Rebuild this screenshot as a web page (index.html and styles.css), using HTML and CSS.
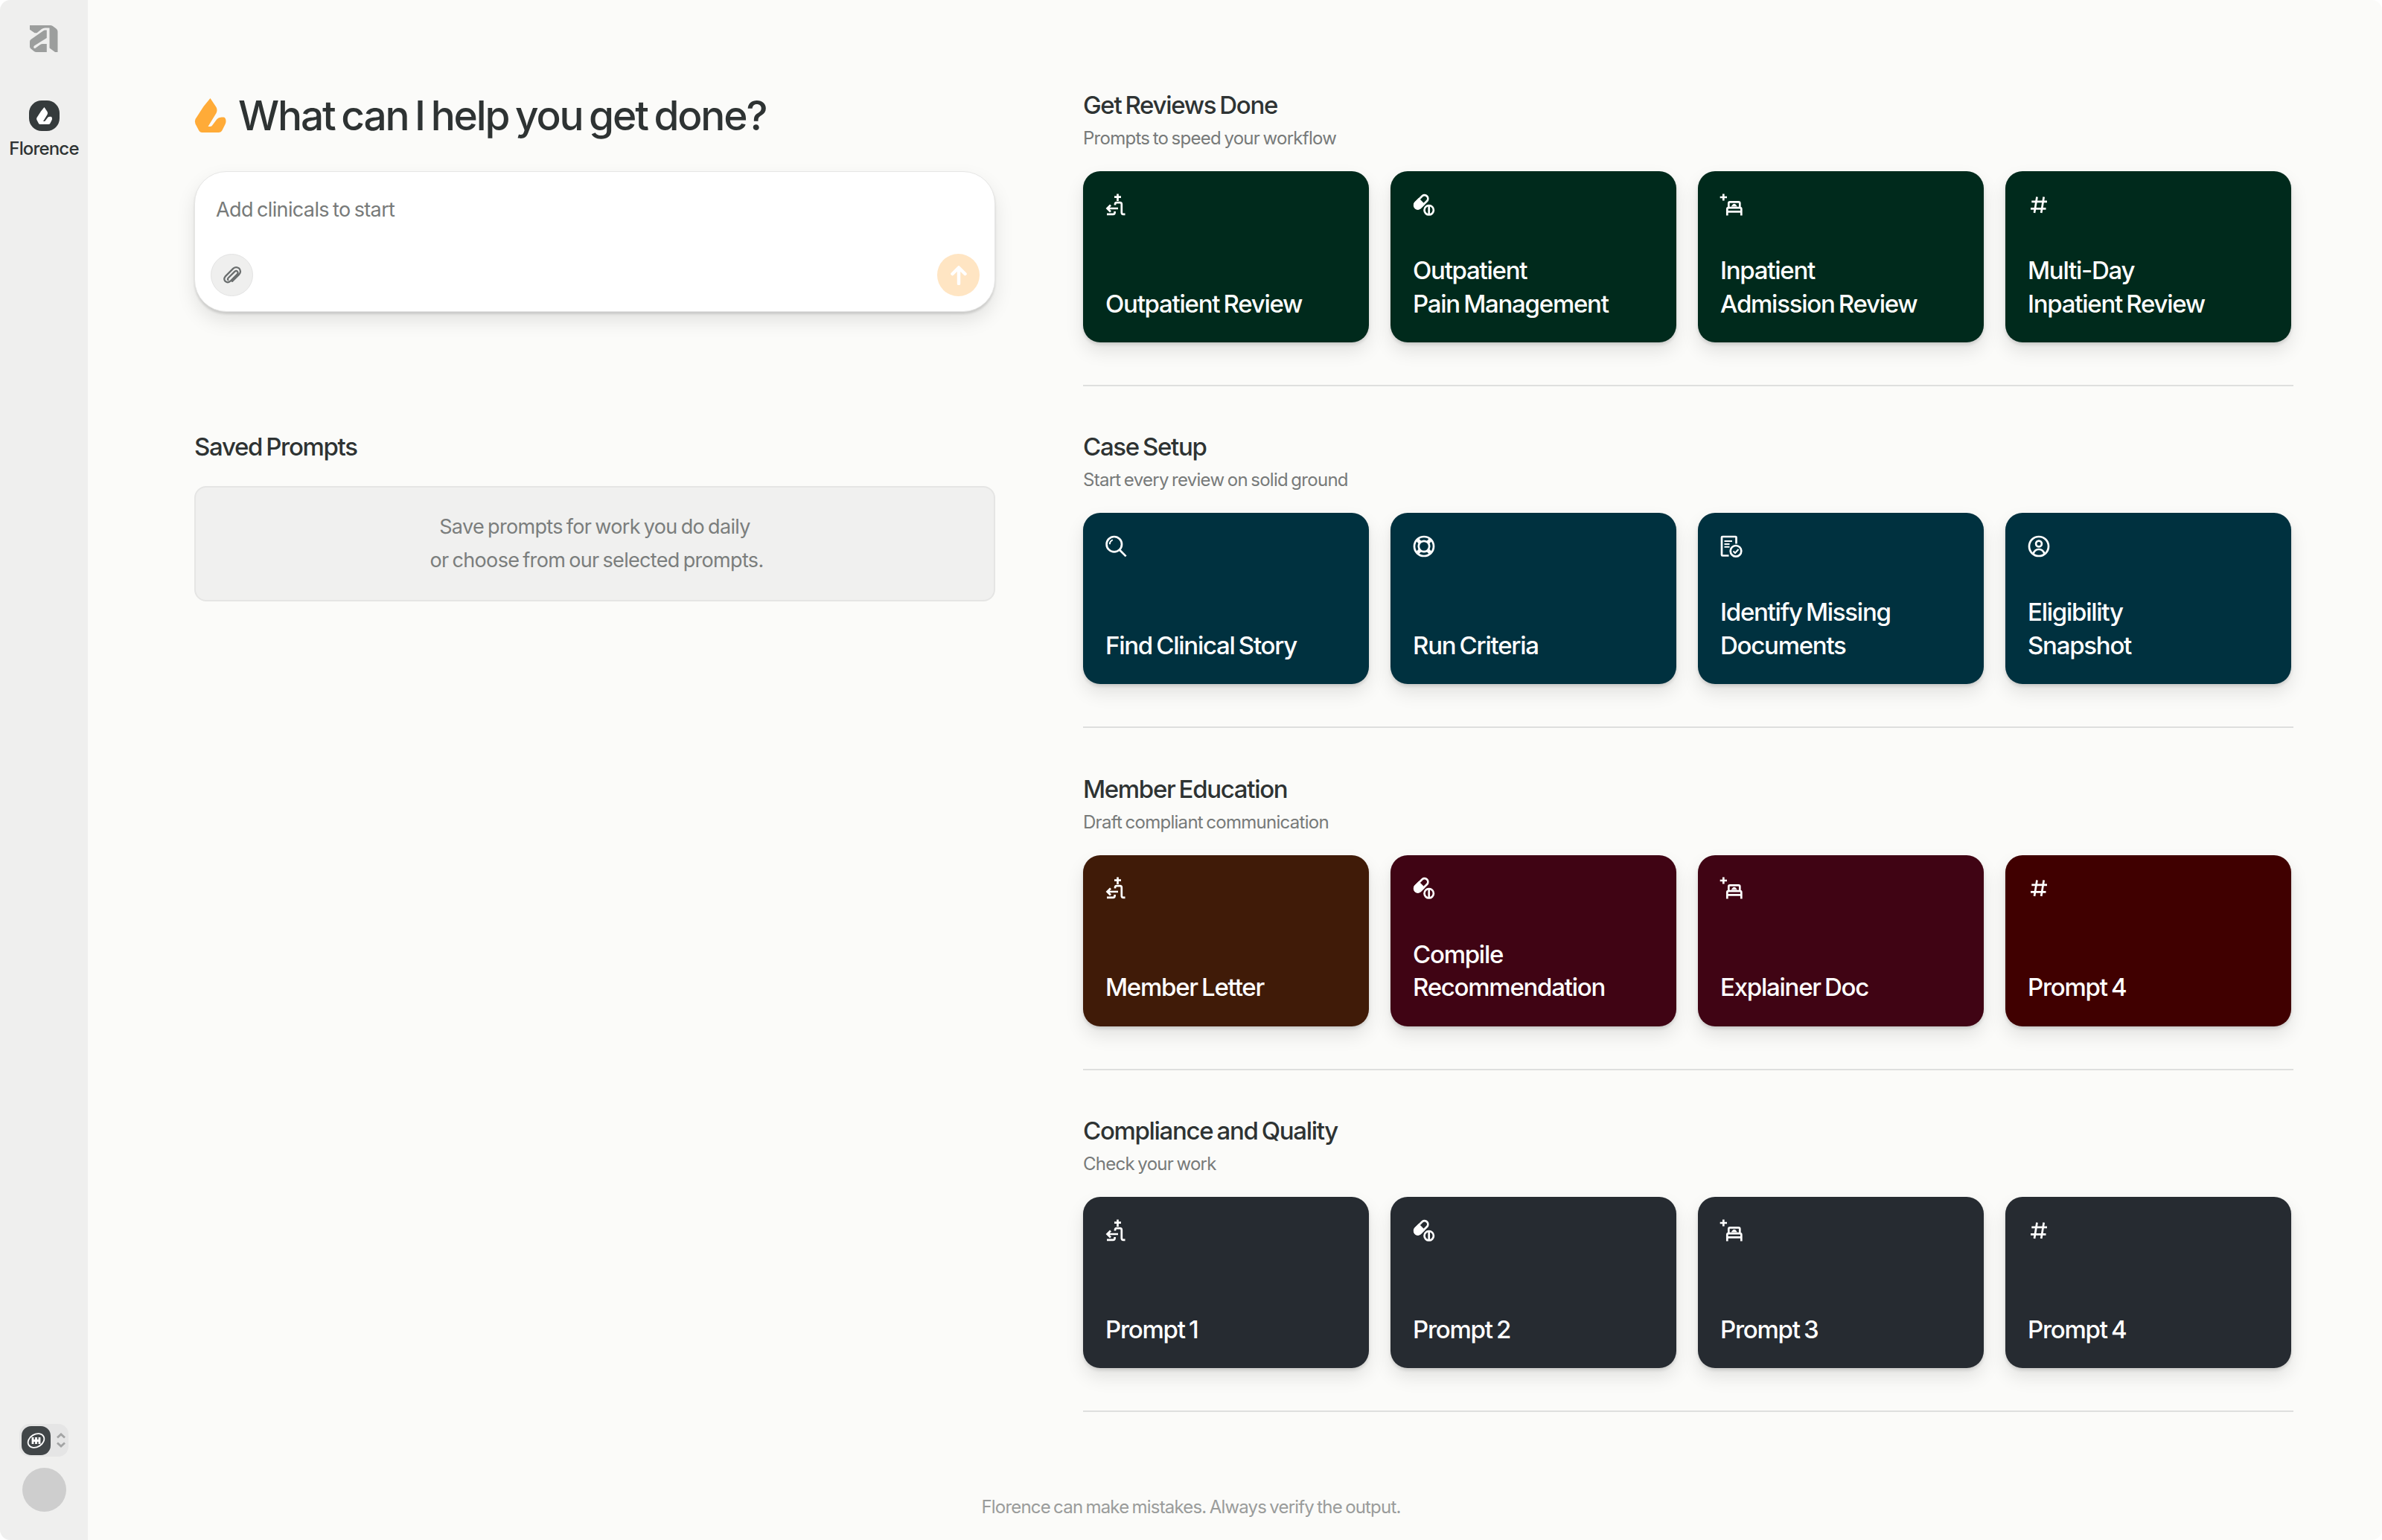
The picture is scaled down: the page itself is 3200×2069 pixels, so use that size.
FILE: index.html
```html
<!DOCTYPE html>
<html lang="en">
<head>
    <meta charset="UTF-8">
    <meta name="viewport" content="width=device-width, initial-scale=1.0">
    <title>Florence</title>
    <link rel="stylesheet" href="styles.css">
</head>
<body>
    <!-- shared icons -->
    <svg class="sprite" width="0" height="0">
        <symbol id="flame" viewBox="0 0 42 46">
            <path d="M21 0L29 12Q31 16 29 20L18 38H21Q23 38 24 36L30 28Q32 25.500 36 25.500H39Q42 26 42 31Q42 33 41 35L37 43Q35.500 46 32 46H10Q7 46 5.500 43L1 34.500Q-.5 31.500 1 28L12 11Z"/>
        </symbol>
        <symbol id="outpatient" viewBox="0 0 30 30">
            <path d="M16.500 .5V10M12 4.700H21M13 15.500V14.500Q13 12.200 15.300 12.200H19.500Q21.800 12.200 21.800 14.500V25.500Q21.800 27.800 24 27.800H26.500M2 27.800H10.300Q12.600 27.800 12.600 25.500V24M17 20H3M7 15.500L2.500 20L7 24.500"/>
        </symbol>
        <symbol id="pill" viewBox="0 0 30 30">
            <path d="M12.700 3.200A4.700 4.700 0 0 1 19.300 9.800L9.800 19.300A4.700 4.700 0 0 1 3.200 12.700Z"/>
            <path class="solid" d="M8 8L14.500 14.500L9.800 19.300A4.700 4.700 0 0 1 3.200 12.700Z"/>
            <path d="M21.700 16V29"/>
            <circle cx="21.700" cy="22.300" r="6.200"/>
        </symbol>
        <symbol id="bed" viewBox="0 0 30 30">
            <path d="M4.300 .4V9.600M-.3 5H9M11.300 18V13Q11.300 11.300 13 11.300H24.600Q26.300 11.300 26.300 13V18M9.300 29.500V21Q9.300 19.200 11 19.200H26.600Q28.300 19.200 28.300 21V29.500M9.300 24.300H28.300"/>
            <path class="solid thin" d="M16.500 16.500Q18.800 13 21 16.500Z"/>
        </symbol>
        <symbol id="hash" viewBox="0 0 30 30">
            <path d="M12.500 4.500L9 26M21.700 4.500L18.200 26M5.300 10.800H26M4 20.300H24.500"/>
        </symbol>
        <symbol id="search" viewBox="0 0 30 30">
            <circle cx="11.800" cy="12.200" r="10.200"/>
            <path d="M19 19.800L27.600 28.400"/>
            <path class="thin" d="M5.800 12.200A6.500 6.500 0 0 1 9.800 6.300"/>
        </symbol>
        <symbol id="buoy" viewBox="0 0 30 30">
            <circle cx="15" cy="15" r="13"/>
            <circle cx="15" cy="15" r="7.200"/>
            <path class="thick" d="M6.600 6.600L9.700 9.700M23.400 6.600L20.300 9.700M6.600 23.400L9.700 20.300M23.400 23.400L20.300 20.300"/>
        </symbol>
        <symbol id="document" viewBox="0 0 30 30">
            <path d="M11.500 27.500H3Q2 27.500 2 26.500V3Q2 2 3 2H20.500Q21.500 2 21.500 3V11.500"/>
            <path class="thin" d="M5.500 8H16M5.500 12H12.500M5.500 15.800H12.500M17.500 21.500L20 24L24.500 19"/>
            <circle cx="21" cy="21.300" r="7.300"/>
        </symbol>
        <symbol id="user" viewBox="0 0 30 30">
            <circle cx="15" cy="15" r="13"/>
            <circle cx="15" cy="11.500" r="3.900"/>
            <path d="M7.500 25Q9.500 19 15 19T22.500 25"/>
        </symbol>
    </svg>

    <div class="app">
        <aside class="sidebar">
            <svg class="logo" viewBox="0 0 38 36">
                <path d="M0 0H28Q30 0 31.500 1.500L35.500 4.500Q37.500 6 37.500 8.500V36H34L26.500 30.500V3.500H20.500Q18 3.500 16 5L9.500 10.200H6.500L0 5.800Z"/>
                <path d="M20.500 6.500H22.800V17L6 27.500Q4.500 29 5.500 30.500Q7 31.500 8.500 30L14 26Q15.500 25 17 25H22.800V36H9Q7 36 5.500 34.800L1.500 31.500Q0 30.500 0 28.500V22Q0 20 1.500 19L18 7.500Q19 6.500 20.500 6.500Z"/>
            </svg>
            <div class="nav-item">
                <div class="nav-icon"><svg viewBox="0 0 42 46"><use href="#flame"/></svg></div>
                <span>Florence</span>
            </div>
            <div class="sidebar-bottom">
                <div class="switcher">
                    <div class="org">
                        <svg viewBox="0 0 26 22">
                            <ellipse cx="12.500" cy="11.500" rx="11.500" ry="8.500" transform="rotate(-30 12.500 11.500)"/>
                            <path class="bars" d="M8 7V16M12.500 7V16M17 7V16M7 11.500H18"/>
                        </svg>
                    </div>
                    <svg class="chevrons" viewBox="0 0 12 20">
                        <path d="M1 6.500L6 2L11 6.500M1 13.500L6 18L11 13.500"/>
                    </svg>
                </div>
                <div class="avatar"></div>
            </div>
        </aside>

        <main class="main">
            <div class="columns">
                <section class="left">
                    <h1><svg viewBox="0 0 42 46"><use href="#flame"/></svg>What can I help you get done?</h1>
                    <div class="composer">
                        <p>Add clinicals to start</p>
                        <div class="composer-actions">
                            <button class="round attach">
                                <svg viewBox="0 0 30 30"><path d="M10 18L18.500 9.500Q21 7.500 22.500 9.500Q24 11.500 22 13.500L12 23.500Q8.500 26.500 5 23.500Q2 20 5 16.500L16.500 5Q20.500 1.500 25 5Q28.500 9.500 25 13.500L15 23.500M10 18Q7.500 20.500 9 21.500"/></svg>
                            </button>
                            <button class="round send">
                                <svg viewBox="0 0 22 26"><path d="M11 24V3M2.500 11L11 2.500L19.500 11"/></svg>
                            </button>
                        </div>
                    </div>
                    <h2 class="saved-title">Saved Prompts</h2>
                    <div class="saved-empty">Save prompts for work you do daily<br>&nbsp;or choose from our selected prompts.</div>
                </section>

                <section class="right">
                    <div class="group green">
                        <h2>Get Reviews Done</h2>
                        <p>Prompts to speed your workflow</p>
                        <div class="cards">
                            <div class="card"><svg><use href="#outpatient"/></svg><span>Outpatient Review</span></div>
                            <div class="card"><svg><use href="#pill"/></svg><span>Outpatient<br>Pain Management</span></div>
                            <div class="card"><svg><use href="#bed"/></svg><span>Inpatient<br>Admission Review</span></div>
                            <div class="card"><svg><use href="#hash"/></svg><span>Multi-Day<br>Inpatient Review</span></div>
                        </div>
                    </div>
                    <div class="group blue">
                        <h2>Case Setup</h2>
                        <p>Start every review on solid ground</p>
                        <div class="cards">
                            <div class="card"><svg><use href="#search"/></svg><span>Find Clinical Story</span></div>
                            <div class="card"><svg><use href="#buoy"/></svg><span>Run Criteria</span></div>
                            <div class="card"><svg><use href="#document"/></svg><span>Identify Missing<br>Documents</span></div>
                            <div class="card"><svg><use href="#user"/></svg><span>Eligibility<br>Snapshot</span></div>
                        </div>
                    </div>
                    <div class="group wine">
                        <h2>Member Education</h2>
                        <p>Draft compliant communication</p>
                        <div class="cards">
                            <div class="card brown"><svg><use href="#outpatient"/></svg><span>Member Letter</span></div>
                            <div class="card"><svg><use href="#pill"/></svg><span>Compile<br>Recommendation</span></div>
                            <div class="card"><svg><use href="#bed"/></svg><span>Explainer Doc</span></div>
                            <div class="card red"><svg><use href="#hash"/></svg><span>Prompt 4</span></div>
                        </div>
                    </div>
                    <div class="group slate">
                        <h2>Compliance and Quality</h2>
                        <p>Check your work</p>
                        <div class="cards">
                            <div class="card"><svg><use href="#outpatient"/></svg><span>Prompt 1</span></div>
                            <div class="card"><svg><use href="#pill"/></svg><span>Prompt 2</span></div>
                            <div class="card"><svg><use href="#bed"/></svg><span>Prompt 3</span></div>
                            <div class="card"><svg><use href="#hash"/></svg><span>Prompt 4</span></div>
                        </div>
                    </div>
                </section>
            </div>
            <footer>Florence can make mistakes. Always verify the output.</footer>
        </main>
    </div>
</body>
</html>
```
FILE: styles.css
```css
* {
    box-sizing: border-box;
}
body {
    margin: 0;
    background-color: #fff;
    font-family: Inter, "Liberation Sans", sans-serif;
    color: #2e3333;
}
h1, h2, p {
    margin: 0;
    font-weight: 500;
}
h1, h2, p, footer, .card, .saved-empty {
    word-spacing: -0.07em;
}
.sprite {
    display: block;
}
.app {
    display: flex;
    height: 2069px;
    background-color: #fbfbf9;
    border-radius: 14px;
    overflow: hidden;
}

/* sidebar */
.sidebar {
    width: 118px;
    flex: none;
    display: flex;
    flex-direction: column;
    align-items: center;
    padding: 34px 0 38px;
    background-color: #efefee;
}
.logo {
    width: 38px;
    height: 36px;
    fill: #9c9e9d;
}
.nav-item {
    display: flex;
    flex-direction: column;
    align-items: center;
    margin-top: 65px;
    font-size: 24px;
    line-height: 30px;
    font-weight: 500;
    letter-spacing: -0.035em;
}
.nav-icon {
    display: flex;
    align-items: center;
    justify-content: center;
    width: 41px;
    height: 41px;
    margin-bottom: 9px;
    border-radius: 17px;
    background-color: #353b3c;
}
.nav-icon svg {
    width: 21px;
    height: 23px;
    fill: #fff;
}
.sidebar-bottom {
    margin-top: auto;
    display: flex;
    flex-direction: column;
    align-items: center;
    gap: 15px;
}
.switcher {
    display: flex;
    align-items: center;
    width: 66px;
    height: 44px;
    padding-left: 3px;
    gap: 8px;
    border-radius: 14px;
    background-color: #e5e5e5;
}
.org {
    display: flex;
    align-items: center;
    justify-content: center;
    width: 39px;
    height: 39px;
    border-radius: 13px;
    background-color: #414648;
}
.org svg {
    width: 26px;
    height: 22px;
    fill: none;
    stroke: #fff;
    stroke-width: 1.800;
}
.org .bars {
    stroke-width: 2.8;
}
.chevrons {
    width: 12px;
    height: 20px;
    fill: none;
    stroke: #a3a4a4;
    stroke-width: 2.8;
}
.avatar {
    width: 59px;
    height: 59px;
    border-radius: 50%;
    background-color: #cecece;
}

/* main area */
.main {
    flex: 1;
    display: flex;
    flex-direction: column;
}
.columns {
    display: flex;
    gap: 118px;
    padding: 120px 119px 0 143px;
}
.left {
    width: 1076px;
    flex: none;
}
h1 {
    display: flex;
    align-items: center;
    gap: 16px;
    height: 70px;
    margin-bottom: 40px;
    font-size: 55px;
    letter-spacing: -0.039em;
    white-space: nowrap;
}
h1 svg {
    width: 43px;
    height: 46px;
    fill: #ffab38;
}
.composer {
    display: flex;
    flex-direction: column;
    justify-content: space-between;
    height: 189px;
    padding: 33px 20px 20px 21px;
    border: 1px solid #e6e6e5;
    border-radius: 43px;
    background-color: #fff;
    box-shadow: 0 3px 3px rgba(0, 0, 0, 0.12), 0 12px 26px rgba(0, 0, 0, 0.1);
}
.composer p {
    padding-left: 7px;
    font-size: 27px;
    line-height: 36px;
    font-weight: 400;
    letter-spacing: -0.023em;
    color: #777a79;
}
.composer-actions {
    display: flex;
    justify-content: space-between;
}
.round {
    display: flex;
    align-items: center;
    justify-content: center;
    width: 57px;
    height: 57px;
    padding: 0;
    border: none;
    border-radius: 50%;
}
.round svg {
    fill: none;
    stroke-linecap: round;
    stroke-linejoin: round;
}
.attach {
    border: 1px solid #e3e3e3;
    background-color: #efefee;
}
.attach svg {
    width: 28px;
    height: 28px;
    stroke: #6a6e6e;
    stroke-width: 2.4;
}
.send {
    background-color: #ffe5c3;
}
.send svg {
    width: 22px;
    height: 26px;
    stroke: #fff;
    stroke-width: 4.5;
}
h2 {
    font-size: 33px;
    line-height: 42px;
    letter-spacing: -0.04em;
}
.saved-title {
    margin: 160px 0 32px;
}
.saved-empty {
    padding: 31px 0;
    border: 2px solid #e5e5e4;
    border-radius: 16px;
    background-color: #f0f0ef;
    font-size: 27px;
    line-height: 44.500px;
    letter-spacing: -0.025em;
    text-align: center;
    color: #7b7e7d;
}

/* prompt groups */
.right {
    flex: 1;
}
.group {
    height: 459.400px;
}
.group p {
    margin-top: 7px;
    font-size: 24px;
    line-height: 34px;
    font-weight: 400;
    letter-spacing: -0.03em;
    color: #777a79;
}
.cards {
    display: grid;
    grid-template-columns: repeat(4, 383.500px);
    gap: 29.500px;
    height: 289px;
    margin-top: 27px;
    padding-bottom: 57px;
    border-bottom: 2px solid #dedfde;
}
.card {
    display: flex;
    flex-direction: column;
    justify-content: space-between;
    padding: 29.500px 30px 30px;
    border-radius: 23px;
    color: #fff;
    font-size: 33px;
    line-height: 44.500px;
    font-weight: 500;
    letter-spacing: -0.038em;
    white-space: nowrap;
    box-shadow: 0 3px 4px rgba(0, 0, 0, 0.12), 0 12px 24px rgba(0, 0, 0, 0.1);
}
.card svg {
    width: 30px;
    height: 30px;
    overflow: visible;
    fill: none;
    stroke: #fff;
    stroke-width: 2.7;
}
symbol {
    overflow: visible;
}
.solid {
    fill: #fff;
}
.thin {
    stroke-width: 2;
}
.thick {
    stroke-width: 5;
}
.green .card {
    background-color: #002a1c;
}
.blue .card {
    background-color: #00313f;
}
.wine .card {
    background-color: #400414;
}
.wine .brown {
    background-color: #401b08;
}
.wine .red {
    background-color: #400000;
}
.slate .card {
    background-color: #262b31;
}
footer {
    margin-top: auto;
    padding: 0 118px 27px 0;
    font-size: 24px;
    line-height: 34px;
    letter-spacing: -0.034em;
    text-align: center;
    color: #9a9c9b;
}
```
